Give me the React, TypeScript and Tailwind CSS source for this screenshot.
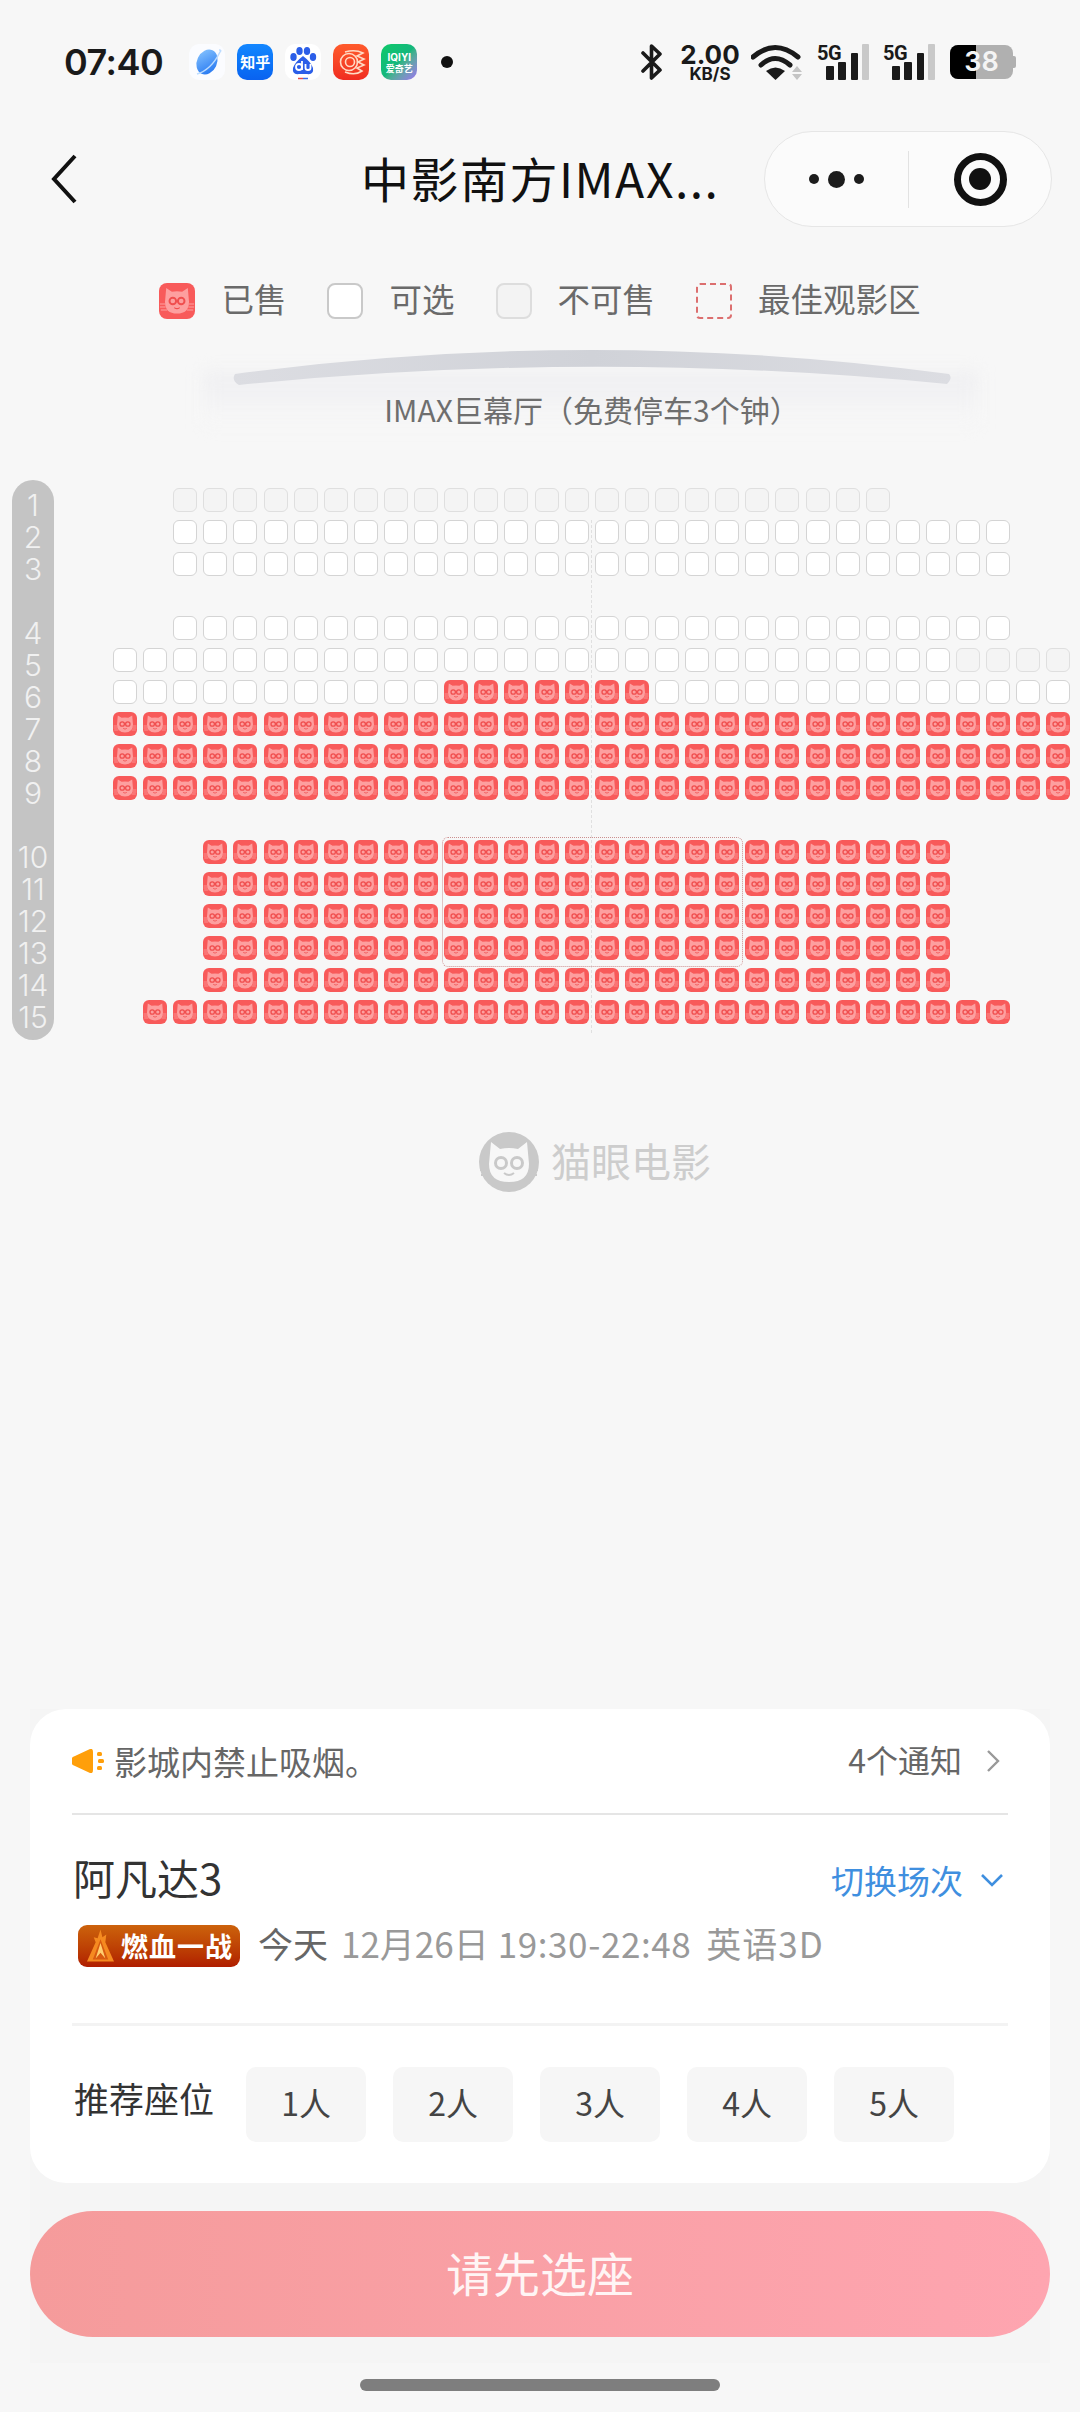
import React from "react";
import { Fragment } from "react";

type Kind = "sold" | "open" | "off";
type Row = { label: string; from: number; to: number; kindAt: (col: number) => Kind };

const all = (kind: Kind) => () => kind;

// 17 lines in the hall, two of them are aisles (label-less)
const rows: (Row | null)[] = [
  { label: "1", from: 2, to: 25, kindAt: all("off") },
  { label: "2", from: 2, to: 29, kindAt: all("open") },
  { label: "3", from: 2, to: 29, kindAt: all("open") },
  null,
  { label: "4", from: 2, to: 29, kindAt: all("open") },
  { label: "5", from: 0, to: 31, kindAt: (c) => (c >= 28 ? "off" : "open") },
  { label: "6", from: 0, to: 31, kindAt: (c) => (c >= 11 && c <= 17 ? "sold" : "open") },
  { label: "7", from: 0, to: 31, kindAt: all("sold") },
  { label: "8", from: 0, to: 31, kindAt: all("sold") },
  { label: "9", from: 0, to: 31, kindAt: all("sold") },
  null,
  { label: "10", from: 3, to: 27, kindAt: all("sold") },
  { label: "11", from: 3, to: 27, kindAt: all("sold") },
  { label: "12", from: 3, to: 27, kindAt: all("sold") },
  { label: "13", from: 3, to: 27, kindAt: all("sold") },
  { label: "14", from: 3, to: 27, kindAt: all("sold") },
  { label: "15", from: 1, to: 29, kindAt: all("sold") },
];

const columns = Array.from({ length: 32 }, (_, i) => i);

const CatFace: React.FC<{ className?: string }> = ({ className }) => (
  <svg viewBox="0 0 24 24" className={className}>
    <path d="M4.8 3.4 L8.6 5.8 Q12 5.2 15.4 5.8 L19.2 3.4 L20 12.5 Q20 20.4 12 20.4 Q4 20.4 4 12.5 Z" fill="#fd9f9f" />
    <circle cx="9.2" cy="12" r="2.2" fill="none" stroke="#f04f4f" strokeWidth="1.3" />
    <circle cx="14.8" cy="12" r="2.2" fill="none" stroke="#f04f4f" strokeWidth="1.3" />
    <path d="M10.2 16.4 Q12 17.8 13.8 16.4" fill="none" stroke="#f04f4f" strokeWidth="0.8" />
    <path d="M0.6 14 H4 M0.6 16 H4.4 M1.2 18 H5.4 M20 14 H23.4 M19.6 16 H23.4 M18.6 18 H22.8" stroke="#fd9f9f" strokeWidth="0.8" />
  </svg>
);

const Seat: React.FC<{ kind: Kind }> = ({ kind }) => {
  if (kind === "sold") {
    return (
      <div className="w-[24px] h-[24px] rounded-[6px] bg-[#f85a5a] overflow-hidden">
        <CatFace className="w-full h-full" />
      </div>
    );
  }
  return (
    <div
      className={
        kind === "open"
          ? "w-[24px] h-[24px] rounded-[6px] bg-white border-[1.5px] border-[#d4d4d4]"
          : "w-[24px] h-[24px] rounded-[6px] bg-[#f4f4f4] border-[1.5px] border-[#dfdfdf]"
      }
    />
  );
};

const LegendItem: React.FC<{ icon: React.ReactNode; text: string }> = ({ icon, text }) => (
  <div className="flex items-center gap-[26px]">
    {icon}
    <span className="text-[32.5px] leading-[36px] pb-[6px] text-[#6a6a6a]">{text}</span>
  </div>
);

const StatusIcons = () => (
  <div className="flex items-center">
    <svg viewBox="0 0 22 38" className="w-[22px] h-[38px]">
      <path d="M2 10 L19 27 L10.5 35 V3 L19 11 L2 28" fill="none" stroke="#1a1a1a" strokeWidth="3.6" strokeLinejoin="round" strokeLinecap="round" />
    </svg>
    <div className="ml-[18px] w-[58px] flex flex-col items-center font-['Inter',sans-serif] font-bold text-[#1a1a1a]">
      <span className="text-[26px] leading-[22px]">2.00</span>
      <span className="text-[17px] leading-[14px] mt-[1px]">KB/S</span>
    </div>
    <svg viewBox="0 0 52 36" className="ml-[12px] w-[52px] h-[36px]">
      <path d="M2 13 Q24 -6 47 13" fill="none" stroke="#1a1a1a" strokeWidth="5" strokeLinecap="round" />
      <path d="M10 21 Q24 8 39 21" fill="none" stroke="#1a1a1a" strokeWidth="5" strokeLinecap="round" />
      <path d="M15 27 L24.5 36 L34 27 Q24.5 20 15 27 Z" fill="#1a1a1a" />
      <path d="M41 28 L46 22 L51 28 Z M41 30 L46 36 L51 30 Z" fill="#c4c4c4" />
    </svg>
    {[0, 1].map((n) => (
      <div key={n} className="ml-[14px] relative w-[52px] h-[36px]">
        <span className="absolute left-0 top-[-1px] text-[20px] leading-[20px] font-bold font-['Roboto',sans-serif] text-[#1a1a1a] tracking-[-0.5px]">5G</span>
        <div className="absolute inset-0 flex items-end justify-end gap-[4.5px]">
          <div className="w-[8px] h-[14px] bg-[#1a1a1a] rounded-[1px]" />
          <div className="w-[8px] h-[18px] bg-[#1a1a1a] rounded-[1px]" />
          <div className="w-[7px] h-[27px] bg-[#1a1a1a] rounded-[1px]" />
          <div className="w-[7px] h-[36px] bg-[#c9c9c9] rounded-[1px]" />
        </div>
      </div>
    ))}
    <div className="ml-[15px] flex items-center">
      <div className="relative w-[63px] h-[34px] rounded-[8px] bg-[#b0b0b0] overflow-hidden flex items-center justify-center">
        <div className="absolute left-0 top-0 bottom-0 w-[26px] bg-black" />
        <span className="relative text-[27px] leading-[34px] font-semibold font-['Inter',sans-serif] text-[#f4f4f4]">38</span>
      </div>
      <div className="w-[3px] h-[12px] bg-[#b0b0b0] rounded-r-[2px]" />
    </div>
  </div>
);

const AppIcons = () => (
  <div className="flex items-center gap-[12px] ml-[26px]">
    <div className="w-[36px] h-[36px] rounded-[10px] bg-[#fbfcff]">
      <svg viewBox="0 0 36 36" className="w-full h-full">
        <defs>
          <linearGradient id="planet" x1="0" y1="0" x2="1" y2="1">
            <stop offset="0" stopColor="#8cc8ff" />
            <stop offset="1" stopColor="#1a6ff0" />
          </linearGradient>
        </defs>
        <ellipse cx="18" cy="18" rx="10" ry="13" transform="rotate(25 18 18)" fill="url(#planet)" />
        <path d="M8 30 Q22 26 31 8 Q33 6 30 6" fill="none" stroke="#bcdcff" strokeWidth="1.5" />
      </svg>
    </div>
    <div className="w-[36px] h-[36px] rounded-[10px] bg-gradient-to-b from-[#1487ff] to-[#0a62f0] flex items-center justify-center text-white text-[15px] leading-[36px] font-bold">
      知乎
    </div>
    <div className="w-[36px] h-[36px] rounded-[10px] bg-white">
      <svg viewBox="0 0 36 36" className="w-full h-full">
        <ellipse cx="8.5" cy="13" rx="3.2" ry="4" fill="#2b5ee8" />
        <ellipse cx="14.5" cy="7" rx="3.2" ry="4" fill="#2b5ee8" />
        <ellipse cx="22" cy="7" rx="3.2" ry="4" fill="#2b5ee8" />
        <ellipse cx="28" cy="13" rx="3.2" ry="4" fill="#2b5ee8" />
        <path d="M18 12 Q26 18 28 24 Q29 31 22 30 H14 Q7 31 8 24 Q10 18 18 12 Z" fill="#2b5ee8" />
        <circle cx="14" cy="23" r="3" fill="none" stroke="#fff" strokeWidth="1.8" />
        <path d="M17 17 V26 M20.5 20 V24 Q20.5 26 23 26 Q25.5 26 25.5 24 V20" fill="none" stroke="#fff" strokeWidth="1.8" />
        <path d="M13 34.5 H18 " stroke="#e54848" strokeWidth="1.5" />
        <path d="M18 34.5 H23" stroke="#3b6ee8" strokeWidth="1.5" />
      </svg>
    </div>
    <div className="w-[36px] h-[36px] rounded-[10px] bg-gradient-to-b from-[#ff5a2c] to-[#f02a20]">
      <svg viewBox="0 0 36 36" className="w-full h-full">
        <circle cx="16" cy="18" r="8.5" fill="none" stroke="#ffd9c4" strokeWidth="1.6" />
        <circle cx="17" cy="18" r="4.5" fill="none" stroke="#ffd9c4" strokeWidth="1.6" />
        <path d="M12 8 Q22 5 30 9 L24 12 L31 15 L25 18 L31 21 L24 24 L29 27 Q22 32 12 28" fill="none" stroke="#ffd9c4" strokeWidth="1.6" />
      </svg>
    </div>
    <div className="w-[36px] h-[36px] rounded-[10px] bg-gradient-to-br from-[#0fc968] via-[#14b77c] to-[#9a6ff0] flex flex-col items-center justify-center text-white font-bold">
      <span className="text-[10px] leading-[12px] font-['Inter',sans-serif]">IQIYI</span>
      <span className="text-[9px] leading-[11px]">爱奇艺</span>
    </div>
    <div className="ml-[12px] w-[12px] h-[12px] rounded-full bg-[#111]" />
  </div>
);

export default function App() {
  return (
    <div className="w-[1080px] h-[2412px] bg-[#f7f7f7] flex flex-col overflow-hidden font-['Noto_Sans_CJK_SC','Noto_Sans',sans-serif]">
      {/* status bar */}
      <div className="h-[124px] flex items-center justify-between pl-[64px] pr-[64px]">
        <div className="flex items-center">
          <span className="text-[36px] leading-[40px] font-semibold font-['Inter',sans-serif] text-[#1a1a1a] tracking-[-0.5px]">07:40</span>
          <AppIcons />
        </div>
        <StatusIcons />
      </div>

      {/* nav */}
      <div className="mt-[7px] h-[96px] relative flex items-center justify-end pr-[28px]">
        <svg viewBox="0 0 26 50" className="absolute left-[51px] top-[23px] w-[26px] h-[50px]">
          <path d="M24 2 L3 25 L24 48" fill="none" stroke="#111" strokeWidth="4" />
        </svg>
        <span className="absolute left-[361px] top-[19px] text-[48px] leading-[54px] tracking-[1.5px] text-[#111]">中影南方IMAX...</span>
        <div className="w-[288px] h-[96px] rounded-full bg-[#fbfbfb] border-[1.5px] border-[#e6e6e6] flex items-center">
          <div className="w-[143px] flex items-center justify-center gap-[9px]">
            <div className="w-[10px] h-[10px] rounded-full bg-[#1c1c1c]" />
            <div className="w-[17px] h-[17px] rounded-full bg-[#1c1c1c]" />
            <div className="w-[10px] h-[10px] rounded-full bg-[#1c1c1c]" />
          </div>
          <div className="w-[1px] h-[57px] bg-[#e2e2e2]" />
          <div className="flex-1 flex items-center justify-center">
            <div className="w-[53px] h-[53px] rounded-full border-[7px] border-[#111] flex items-center justify-center">
              <div className="w-[22px] h-[22px] rounded-full bg-[#111]" />
            </div>
          </div>
        </div>
      </div>

      {/* legend */}
      <div className="mt-[56px] h-[36px] flex items-center justify-center gap-[41px]">
        <LegendItem
          text="已售"
          icon={
            <div className="w-[36px] h-[36px] rounded-[8px] bg-[#f85a5a] overflow-hidden">
              <CatFace className="w-full h-full" />
            </div>
          }
        />
        <LegendItem text="可选" icon={<div className="w-[36px] h-[36px] rounded-[8px] bg-white border-2 border-[#c9c9c9]" />} />
        <LegendItem text="不可售" icon={<div className="w-[36px] h-[36px] rounded-[8px] bg-[#f3f3f3] border-2 border-[#dddddd]" />} />
        <LegendItem text="最佳观影区" icon={<div className="w-[36px] h-[36px] rounded-[4px] border-[2.5px] border-dashed border-[#dc6f6f]" />} />
      </div>

      {/* screen, centred on the hall's middle line rather than on the page */}
      <div className="mt-[31px] relative flex flex-col items-center pl-[104px]">
        <div className="absolute left-[203px] top-[22px] w-[775px] h-[52px] bg-gradient-to-b from-[#eeeef1] to-[#f7f7f7] blur-[8px]" />
        <svg viewBox="0 0 722 36" className="relative w-[722px] h-[36px]">
          <defs>
            <linearGradient id="screenFill" x1="0" y1="0" x2="1" y2="0">
              <stop offset="0" stopColor="#dcdde2" />
              <stop offset="0.5" stopColor="#d0d2d8" />
              <stop offset="1" stopColor="#dcdde2" />
            </linearGradient>
          </defs>
          <path d="M4 24 Q361 -24 718 24 Q722 28 716 34 Q361 -1 8 35 Q0 30 4 24 Z" fill="url(#screenFill)" />
        </svg>
        <span className="relative mt-[5px] text-[30px] leading-[36px] text-[#6e6e6e]">IMAX巨幕厅（免费停车3个钟）</span>
      </div>

      {/* seat map */}
      <div className="mt-[53px] flex h-[560px]">
        <div className="ml-[12px] w-[42px] h-full rounded-full bg-[#c4c4c4] pt-[8.5px] flex flex-col items-center text-[#f1f1f1] text-[30px] font-light font-['Inter',sans-serif]">
          {rows.map((row, i) => (
            <div key={i} className="h-[32px] leading-[32px]">
              {row ? row.label : ""}
            </div>
          ))}
        </div>
        <div className="ml-[56px] relative pt-[3.5px] w-[964px]">
          <div className="absolute left-[481px] top-[40px] h-[513px] border-l border-dashed border-[#e0e0e0]" />
          <div className="absolute left-[332px] top-[357px] w-[301px] h-[130px] rounded-[6px] border border-dotted border-[#cc8f8f] z-10" />
          <div className="relative">
            {rows.map((row, i) => (
              <div key={i} className="h-[32px] grid grid-cols-[repeat(32,30.12px)] items-center">
                {row &&
                  columns.map((col) => (
                    <Fragment key={col}>
                      {col >= row.from && col <= row.to ? (
                        <div className="flex justify-center">
                          <Seat kind={row.kindAt(col)} />
                        </div>
                      ) : (
                        <div />
                      )}
                    </Fragment>
                  ))}
              </div>
            ))}
          </div>
        </div>
      </div>

      {/* maoyan watermark */}
      <div className="mt-[90px] flex items-center justify-center gap-[12px] pl-[110px]">
        <svg viewBox="0 0 60 60" className="w-[60px] h-[60px]">
          <circle cx="30" cy="30" r="30" fill="#c9c9c9" />
          <path d="M12 10 L21 17 Q30 15 39 17 L48 10 L50 32 Q50 50 30 50 Q10 50 10 32 Z" fill="#f7f7f7" />
          <circle cx="22" cy="31" r="5.5" fill="none" stroke="#c9c9c9" strokeWidth="3" />
          <circle cx="38" cy="31" r="5.5" fill="none" stroke="#c9c9c9" strokeWidth="3" />
          <path d="M25 41 Q30 45 35 41" fill="none" stroke="#c9c9c9" strokeWidth="2" />
          <path d="M1 38 H10 M2 43 H11 M50 38 H59 M49 43 H58" stroke="#c9c9c9" strokeWidth="2" />
        </svg>
        <span className="text-[40px] leading-[60px] pb-[4px] text-[#cdcdcd]">猫眼电影</span>
      </div>

      {/* bottom panel */}
      <div className="mt-auto mx-[30px] bg-[#f5f5f5]">
        <div className="bg-white rounded-[36px] px-[42px] pb-[41px]">
          <div className="h-[104px] flex items-center justify-between">
            <div className="flex items-center gap-[10px]">
              <svg viewBox="0 0 32 24" className="w-[32px] h-[24px]">
                <path d="M0 9 Q0 8 3 7 L18 0 Q21 -1 21 3 V21 Q21 25 18 24 L3 17 Q0 16 0 15 Z" fill="#ff9f0a" />
                <rect x="25" y="3" width="5" height="4" rx="1.5" fill="#ff9f0a" />
                <rect x="26" y="10" width="6" height="4" rx="1.5" fill="#ff9f0a" />
                <rect x="25" y="17" width="5" height="4" rx="1.5" fill="#ff9f0a" />
              </svg>
              <span className="text-[33px] leading-[40px] text-[#666]">影城内禁止吸烟。</span>
            </div>
            <div className="flex items-center gap-[24px] pr-[8px]">
              <span className="text-[32px] leading-[40px] pb-[5px] text-[#666]">4个通知</span>
              <svg viewBox="0 0 14 24" className="w-[14px] h-[24px]">
                <path d="M2 2 L12 12 L2 22" fill="none" stroke="#999" strokeWidth="2.4" />
              </svg>
            </div>
          </div>
          <div className="h-[2px] bg-[#e5e5e5]" />

          <div className="mt-[40px] h-[50px] flex items-center justify-between">
            <span className="ml-[1px] text-[42px] leading-[50px] pb-[6px] text-[#333]">阿凡达3</span>
            <div className="flex items-center gap-[17px] pr-[4px]">
              <span className="text-[33px] leading-[40px] pb-[1px] text-[#3f8fdf]">切换场次</span>
              <svg viewBox="0 0 24 14" className="w-[24px] h-[14px]">
                <path d="M2 2 L12 12 L22 2" fill="none" stroke="#3f8fdf" strokeWidth="2.6" />
              </svg>
            </div>
          </div>

          <div className="mt-[20px] h-[42px] flex items-center">
            <div className="ml-[6px] w-[162px] h-[42px] rounded-[9px] bg-gradient-to-b from-[#cc620c] to-[#b01c00] flex items-center pl-[8px] gap-[6px]">
              <svg viewBox="0 0 30 34" className="w-[29px] h-[34px] shrink-0">
                <path d="M15 0 L17 8 L21 5 L20 13 L29 33 H1 L10 13 L8 8 L12 9 Z" fill="#f58a20" />
                <path d="M15 10 L23 31 H7 Z" fill="#d85a10" />
                <path d="M15 14 L20 30 L15 24 L10 30 Z" fill="#ffcf70" />
              </svg>
              <span className="text-[27px] leading-[42px] font-bold text-white tracking-[1px]">燃血一战</span>
            </div>
            <span className="ml-[18px] text-[35px] leading-[42px] pb-[7px] text-[#666]">今天</span>
            <div className="ml-[13px] flex text-[35px] leading-[42px] pb-[7px] text-[#999]">
              <span>12月26日</span>
              <span className="ml-[9px] tracking-[0.6px]">19:30-22:48</span>
              <span className="ml-[15px] tracking-[1px]">英语3D</span>
            </div>
          </div>

          <div className="mt-[56px] h-[3px] bg-[#f3f3f3]" />

          <div className="mt-[41px] h-[75px] flex items-start">
            <span className="ml-[2px] mt-[9px] text-[35px] leading-[44px] text-[#333]">推荐座位</span>
            <div className="ml-[32px] flex gap-[27px]">
              {["1人", "2人", "3人", "4人", "5人"].map((label) => (
                <div key={label} className="w-[120px] h-[75px] pb-[6px] rounded-[10px] bg-[#f6f6f6] flex items-center justify-center text-[32px] text-[#444]">
                  {label}
                </div>
              ))}
            </div>
          </div>
        </div>

        <div className="mt-[28px] mb-[26px] h-[126px] pb-[4px] rounded-full bg-gradient-to-r from-[#f59b9b] to-[#fea5b0] flex items-center justify-center text-[47px] text-[#fff5f5]">
          请先选座
        </div>
      </div>

      {/* home indicator */}
      <div className="h-[49px] pt-[16px] flex justify-center">
        <div className="w-[360px] h-[12px] rounded-full bg-[#7e7e7e]" />
      </div>
    </div>
  );
}
